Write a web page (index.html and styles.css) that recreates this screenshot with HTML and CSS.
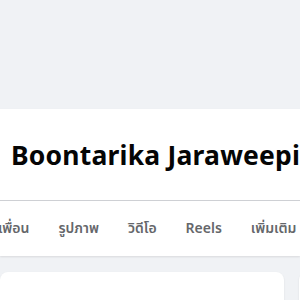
FILE: index.html
```html
<!DOCTYPE html>
<html lang="th">
<head>
<meta charset="utf-8">
<link rel="stylesheet" href="styles.css">
</head>
<body>
<div class="cover"></div>
<section class="profile">
  <div class="head">
    <h1 class="name">Boontarika Jaraweepi</h1>
  </div>
  <nav class="tabs">
    <span class="tab">เพื่อน</span>
    <span class="tab">รูปภาพ</span>
    <span class="tab">วิดีโอ</span>
    <span class="tab">Reels</span>
    <span class="tab">เพิ่มเติม</span>
  </nav>
</section>
<main class="content">
  <div class="card"></div>
  <div class="card side"></div>
</main>
</body>
</html>
```
FILE: styles.css
```css
* { box-sizing: border-box; }
html, body { margin: 0; padding: 0; }
body {
  background: #f0f2f5;
  font-family: "Noto Sans", "Noto Sans Thai", "Open Sans", sans-serif;
  width: 300px;
  height: 300px;
  overflow: hidden;
}
.cover { height: 109px; }
.profile {
  background: #fff;
  box-shadow: 0 1px 2px rgba(0,0,0,0.1);
}
.head {
  height: 92px;
  padding: 0 0 0 11px;
  display: flex;
  align-items: center;
  border-bottom: 1px solid #ced0d4;
  white-space: nowrap;
  overflow: hidden;
}
.name {
  margin: 0;
  font-size: 26.5px;
  letter-spacing: 0.2px;
  font-weight: 700;
  color: #050505;
  line-height: 1;
  padding-top: 1px;
}
.tabs {
  height: 55px;
  display: flex;
  align-items: baseline;
  padding-top: 17px;
  gap: 29px;
  margin-left: -2px;
  white-space: nowrap;
  overflow: hidden;
}
.tab {
  font-size: 14px;
  line-height: 20px;
  font-weight: 600;
  color: #65676b;
}
.content {
  display: flex;
  gap: 15px;
  padding-top: 16px;
}
.card {
  flex: 0 0 284px;
  height: 60px;
  background: #fff;
  border-radius: 8px;
  box-shadow: 0 1px 2px rgba(0,0,0,0.1);
}
.card.side { flex: 0 0 200px; }
```
